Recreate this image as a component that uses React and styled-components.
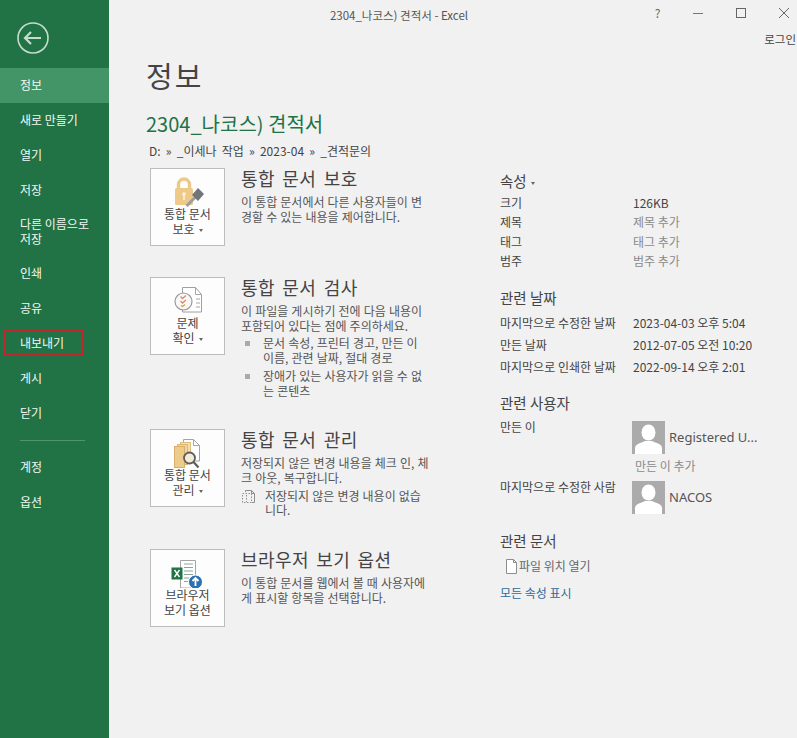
import React from "react";
import styled, { createGlobalStyle } from "styled-components";

const Global = createGlobalStyle`
    html, body {
        margin: 0;
        padding: 0;
        background: #f1f1f1;
    }
    body {
        font-family: "Noto Sans CJK KR", "Noto Sans", sans-serif;
        color: #444;
    }
`;

const Page = styled.div`
    display: flex;
    width: 797px;
    height: 738px;
    overflow: hidden;
`;

const Sidebar = styled.nav`
    width: 109px;
    flex: none;
    background: #217346;
    color: #f2f7f4;
    font-size: 12px;
`;

const BackWrap = styled.div`
    height: 68px;
    padding: 22px 0 0 17px;
    box-sizing: border-box;
`;

const NavItem = styled.div`
    position: relative;
    display: flex;
    align-items: center;
    height: ${props => (props.$tall ? "48px" : "35px")};
    box-sizing: border-box;
    padding: 0 0 2px 20px;
    line-height: 15px;
    white-space: nowrap;
    background: ${props => (props.$active ? "#439467" : "transparent")};
`;

const RedMark = styled.div`
    position: absolute;
    left: 3px;
    top: 4px;
    width: 80px;
    height: 26px;
    box-sizing: border-box;
    border: 2px solid #c0282d;
`;

const NavLine = styled.div`
    height: 1px;
    margin: 9px 24px 9px 20px;
    background: #4f9570;
`;

const Main = styled.main`
    flex: 1;
    display: flex;
    flex-direction: column;
    min-width: 0;
`;

const TitleBar = styled.header`
    position: relative;
    height: 48px;
    padding-right: 108px;
    text-align: center;
    font-size: 11.5px;
    line-height: 30px;
    color: #555;
`;

const WindowButtons = styled.div`
    position: absolute;
    top: 5px;
    right: -8px;
    display: flex;
    align-items: center;
    height: 16px;
`;

const WinButton = styled.div`
    display: flex;
    justify-content: center;
    align-items: center;
    width: ${props => props.$w || 43}px;
    color: #666;
    font-size: 12px;
    line-height: 16px;
`;

const Login = styled.div`
    position: absolute;
    top: 31px;
    right: 1px;
    font-size: 11.5px;
    line-height: 16px;
    color: #444;
`;

const Content = styled.div`
    display: flex;
    padding-left: 37px;
`;

const LeftColumn = styled.div`
    width: 354px;
    flex: none;
`;

const PageTitle = styled.h1`
    margin: 0;
    font-size: 29px;
    font-weight: 400;
    line-height: 54px;
    color: #444;
    letter-spacing: 2px;
`;

const FileTitle = styled.h2`
    margin: 8px 0 0;
    font-size: 20px;
    font-weight: 400;
    line-height: 28px;
    color: #217346;
`;

const PathLine = styled.div`
    margin: 5px 0 0 3px;
    font-size: 12px;
    line-height: 16px;
    word-spacing: 2.5px;
    color: #444;
`;

const Card = styled.section`
    display: flex;
    gap: 16px;
    margin: ${props => props.$top || 0}px 0 31px 4px;
`;

const CardButton = styled.div`
    flex: none;
    width: 75px;
    height: 78px;
    box-sizing: border-box;
    display: flex;
    flex-direction: column;
    align-items: center;
    padding-top: 6px;
    background: #fdfdfd;
    border: 1px solid #bdbdbd;
    font-size: 12px;
    line-height: 14.7px;
    text-align: center;
    color: #444;
    svg {
        display: block;
    }
`;

const Caret = styled.span`
    display: inline-block;
    margin-left: 4px;
    vertical-align: 2px;
    border-left: 2.5px solid transparent;
    border-right: 2.5px solid transparent;
    border-top: 3px solid #666;
`;

const CardBody = styled.div`
    min-width: 0;
    font-size: 12px;
    line-height: 14.7px;
    word-spacing: 0.4px;
    color: #555;
`;

const CardHeading = styled.h3`
    margin: -2px 0 5px;
    font-size: 18px;
    font-weight: 400;
    line-height: 24px;
    letter-spacing: 0.4px;
    word-spacing: 3px;
    color: #444;
`;

const BulletRow = styled.div`
    display: flex;
    margin: 3px 0 3px 4px;
    color: #555;
    &:last-child {
        margin-bottom: 0;
    }
`;

const BulletMark = styled.span`
    flex: none;
    width: 5px;
    height: 5px;
    margin: 5px 13px 0 0;
    background: #aaa;
`;

const NoteRow = styled.div`
    display: flex;
    gap: 9px;
    margin: 3px 0 0;
`;

const RightColumn = styled.aside`
    width: 280px;
    flex: none;
    padding-top: 124px;
    font-size: 12px;
    line-height: 16px;
`;

const PropHeading = styled.div`
    font-size: 14.5px;
    line-height: 18px;
    color: #444;
    margin: ${props => props.$top || 0}px 0 ${props => props.$bottom || 0}px;
`;

const PropRow = styled.div`
    display: flex;
    height: ${props => props.$h || 19.4}px;
`;

const PropLabel = styled.span`
    width: 133px;
    flex: none;
    color: #444;
`;

const PersonLabel = styled(PropLabel)`
    width: 132px;
    margin-top: -2px;
`;

const PropValue = styled.span`
    color: ${props => (props.$muted ? "#8a8a8a" : "#444")};
`;

const PersonRow = styled.div`
    display: flex;
    margin-top: ${props => props.$top || 0}px;
`;

const Person = styled.div`
    display: flex;
    align-items: center;
    gap: 4px;
    font-size: 13px;
    color: #555;
    font-family: "Noto Sans", sans-serif;
`;

const AddAuthor = styled.div`
    margin: 4px 0 0 135px;
    color: #8a8a8a;
`;

const FileLink = styled.div`
    display: flex;
    align-items: center;
    gap: 1px;
    margin: 8px 0 0 5px;
    color: #666;
`;

const AllProps = styled.div`
    margin-top: 10px;
    color: #2b6a9e;
`;

const BackIcon = () => (
    <svg width="32" height="32" viewBox="0 0 32 32" fill="none" stroke="#c4ddcf">
        <circle cx="16" cy="16" r="15" strokeWidth="1.6" />
        <path d="M8 16h16M14 10l-6 6 6 6" strokeWidth="2.2" />
    </svg>
);

const LockIcon = () => (
    <svg width="34" height="32" viewBox="0 0 34 32">
        <path d="M7.500 14V9.500a5.500 5.500 0 0 1 11 0V14" fill="none" stroke="#ecc988" strokeWidth="3.400" />
        <rect x="4" y="13" width="18" height="17" rx="1.500" fill="#eec987" />
        <circle cx="13" cy="19" r="1.800" fill="#fff3d8" />
        <rect x="12.200" y="20" width="1.600" height="5" fill="#fff3d8" />
        <path d="M15.500 31l9-9" stroke="#9b9fa3" strokeWidth="3" />
        <path d="M21 20l6-7 6 6-6 7z" fill="#6f7579" />
    </svg>
);

const InspectIcon = () => (
    <svg width="34" height="32" viewBox="0 0 34 32" fill="none">
        <path d="M11.500 3.500h13l6 7v17.500h-19z" fill="#fff" stroke="#a0a0a0" />
        <path d="M24.500 3.500v7h6M25 15h4M25 19h4M25 23h4" stroke="#a5a5a5" />
        <circle cx="12.500" cy="17.500" r="8.500" fill="#f8f8f8" stroke="#9a9a9a" strokeWidth="1.200" />
        <path d="M9.500 12.500l2 2 3.500-3M9.500 17l2 2 3.500-3" stroke="#d9896a" strokeWidth="1.300" />
        <path d="M10 21.500l1.500 1 2.500-2" stroke="#cfa54a" strokeWidth="1.300" />
    </svg>
);

const ManageIcon = () => (
    <svg width="34" height="32" viewBox="0 0 34 32" fill="none">
        <path d="M12.500 3.500h10l6 6V25h-16z" fill="#fff" stroke="#a5a5a5" />
        <path d="M22.500 3.500v6h6" stroke="#a5a5a5" />
        <rect x="9.500" y="6.500" width="10" height="19" fill="#f2dfb8" stroke="#dfbd80" />
        <rect x="6.500" y="8.500" width="10" height="20" fill="#efd6a3" stroke="#dcb672" />
        <rect x="3.500" y="10.500" width="10" height="21" fill="#eccb8b" stroke="#d9ae66" />
        <circle cx="18.500" cy="22" r="5.500" fill="#f4ecd8" stroke="#5d5d5d" strokeWidth="1.800" />
        <path d="M22.500 26l5 5.500" stroke="#5d5d5d" strokeWidth="2.200" />
    </svg>
);

const BrowserIcon = () => (
    <svg width="34" height="32" viewBox="0 0 34 32" fill="none">
        <path d="M9.500 4.500h15V32h-15z" fill="#fff" stroke="#a5a5a5" />
        <path d="M13 8h9M13 11.500h9M13 15h9M13 18.500h9M13 22h5M13 25.500h5" stroke="#8aa698" />
        <rect x="0.500" y="11.500" width="11" height="12" fill="#217346" />
        <path d="M3.500 14l5 7M8.500 14l-5 7" stroke="#fff" strokeWidth="1.400" />
        <circle cx="24.500" cy="26" r="7" fill="#2a70b2" stroke="#fff" />
        <path d="M24.500 30v-7.500M21.500 25l3-3 3 3" stroke="#fff" strokeWidth="1.800" />
    </svg>
);

const NoteIcon = () => (
    <svg width="15" height="15" viewBox="0 0 15 15" fill="none" stroke="#8f8f8f">
        <path d="M4.500 3V1.500h6l3 3V13.500H11" />
        <path d="M10.500 1.500v3h3" />
        <path d="M1.500 4.500h9v9h-9z" strokeDasharray="1.500 1.500" />
        <path d="M5.500 6v7" strokeDasharray="1.500 1.500" />
    </svg>
);

const FileIcon = () => (
    <svg width="13" height="17" viewBox="0 0 13 17" fill="#fff" stroke="#8d8d8d">
        <path d="M1.500 1.500h7l3 3v11h-10z" />
        <path d="M8.500 1.500v3h3" fill="none" />
    </svg>
);

const AvatarBox = styled.svg`
    display: block;
    flex: none;
`;

const Avatar = () => (
    <AvatarBox width="33" height="33" viewBox="0 0 33 33">
        <rect width="33" height="33" fill="#ababab" />
        <ellipse cx="16.500" cy="11.500" rx="7" ry="8" fill="#fff" />
        <path d="M3 33v-6c0-4 6-5 10-7h7c4 2 10 3 10 7v6z" fill="#fff" />
    </AvatarBox>
);

const navTop = ["새로 만들기", "열기", "저장"];
const navMid = ["인쇄", "공유"];

const App = () => (
    <Page>
        <Global />
        <Sidebar>
            <BackWrap>
                <BackIcon />
            </BackWrap>
            <NavItem $active>정보</NavItem>
            {navTop.map(label => (
                <NavItem key={label}>{label}</NavItem>
            ))}
            <NavItem $tall>
                <span>
                    다른 이름으로
                    <br />
                    저장
                </span>
            </NavItem>
            {navMid.map(label => (
                <NavItem key={label}>{label}</NavItem>
            ))}
            <NavItem>
                내보내기
                <RedMark />
            </NavItem>
            <NavItem>게시</NavItem>
            <NavItem>닫기</NavItem>
            <NavLine />
            <NavItem>계정</NavItem>
            <NavItem>옵션</NavItem>
        </Sidebar>
        <Main>
            <TitleBar>
                2304_나코스) 견적서 - Excel
                <WindowButtons>
                    <WinButton $w={37}>?</WinButton>
                    <WinButton>
                        <svg width="10" height="10" viewBox="0 0 10 10" stroke="#777">
                            <path d="M0 5.500h10" />
                        </svg>
                    </WinButton>
                    <WinButton>
                        <svg width="10" height="10" viewBox="0 0 10 10" fill="none" stroke="#666">
                            <rect x="0.500" y="0.500" width="9" height="9" />
                        </svg>
                    </WinButton>
                    <WinButton>
                        <svg width="10" height="10" viewBox="0 0 10 10" stroke="#666">
                            <path d="M0 0l10 10M10 0L0 10" />
                        </svg>
                    </WinButton>
                </WindowButtons>
                <Login>로그인</Login>
            </TitleBar>
            <Content>
                <LeftColumn>
                    <PageTitle>정보</PageTitle>
                    <FileTitle>2304_나코스) 견적서</FileTitle>
                    <PathLine>D: » _이세나 작업 » 2023-04 » _견적문의</PathLine>
                    <Card $top={9}>
                        <CardButton>
                            <LockIcon />
                            <span>
                                통합 문서
                                <br />
                                보호
                                <Caret />
                            </span>
                        </CardButton>
                        <CardBody>
                            <CardHeading>통합 문서 보호</CardHeading>
                            이 통합 문서에서 다른 사용자들이 변
                            <br />
                            경할 수 있는 내용을 제어합니다.
                        </CardBody>
                    </Card>
                    <Card>
                        <CardButton>
                            <InspectIcon />
                            <span>
                                문제
                                <br />
                                확인
                                <Caret />
                            </span>
                        </CardButton>
                        <CardBody>
                            <CardHeading>통합 문서 검사</CardHeading>
                            이 파일을 게시하기 전에 다음 내용이
                            <br />
                            포함되어 있다는 점에 주의하세요.
                            <BulletRow>
                                <BulletMark />
                                <span>
                                    문서 속성, 프린터 경고, 만든 이
                                    <br />
                                    이름, 관련 날짜, 절대 경로
                                </span>
                            </BulletRow>
                            <BulletRow>
                                <BulletMark />
                                <span>
                                    장애가 있는 사용자가 읽을 수 없
                                    <br />는 콘텐츠
                                </span>
                            </BulletRow>
                        </CardBody>
                    </Card>
                    <Card>
                        <CardButton>
                            <ManageIcon />
                            <span>
                                통합 문서
                                <br />
                                관리
                                <Caret />
                            </span>
                        </CardButton>
                        <CardBody>
                            <CardHeading>통합 문서 관리</CardHeading>
                            저장되지 않은 변경 내용을 체크 인, 체
                            <br />
                            크 아웃, 복구합니다.
                            <NoteRow>
                                <NoteIcon />
                                <span>
                                    저장되지 않은 변경 내용이 없습
                                    <br />
                                    니다.
                                </span>
                            </NoteRow>
                        </CardBody>
                    </Card>
                    <Card>
                        <CardButton>
                            <BrowserIcon />
                            <span>
                                브라우저
                                <br />
                                보기 옵션
                            </span>
                        </CardButton>
                        <CardBody>
                            <CardHeading>브라우저 보기 옵션</CardHeading>
                            이 통합 문서를 웹에서 볼 때 사용자에
                            <br />
                            게 표시할 항목을 선택합니다.
                        </CardBody>
                    </Card>
                </LeftColumn>
                <RightColumn>
                    <PropHeading $bottom={5}>
                        속성
                        <Caret />
                    </PropHeading>
                    <PropRow>
                        <PropLabel>크기</PropLabel>
                        <PropValue>126KB</PropValue>
                    </PropRow>
                    <PropRow>
                        <PropLabel>제목</PropLabel>
                        <PropValue $muted>제목 추가</PropValue>
                    </PropRow>
                    <PropRow>
                        <PropLabel>태그</PropLabel>
                        <PropValue $muted>태그 추가</PropValue>
                    </PropRow>
                    <PropRow>
                        <PropLabel>범주</PropLabel>
                        <PropValue $muted>범주 추가</PropValue>
                    </PropRow>
                    <PropHeading $top={16} $bottom={8}>
                        관련 날짜
                    </PropHeading>
                    <PropRow $h={22}>
                        <PropLabel>마지막으로 수정한 날짜</PropLabel>
                        <PropValue>2023-04-03 오후 5:04</PropValue>
                    </PropRow>
                    <PropRow $h={22}>
                        <PropLabel>만든 날짜</PropLabel>
                        <PropValue>2012-07-05 오전 10:20</PropValue>
                    </PropRow>
                    <PropRow $h={22}>
                        <PropLabel>마지막으로 인쇄한 날짜</PropLabel>
                        <PropValue>2022-09-14 오후 2:01</PropValue>
                    </PropRow>
                    <PropHeading $top={13}>관련 사용자</PropHeading>
                    <PersonRow $top={9}>
                        <PersonLabel>만든 이</PersonLabel>
                        <Person>
                            <Avatar />
                            Registered U...
                        </Person>
                    </PersonRow>
                    <AddAuthor>만든 이 추가</AddAuthor>
                    <PersonRow $top={7}>
                        <PersonLabel>마지막으로 수정한 사람</PersonLabel>
                        <Person>
                            <Avatar />
                            NACOS
                        </Person>
                    </PersonRow>
                    <PropHeading $top={18}>관련 문서</PropHeading>
                    <FileLink>
                        <FileIcon />
                        파일 위치 열기
                    </FileLink>
                    <AllProps>모든 속성 표시</AllProps>
                </RightColumn>
            </Content>
        </Main>
    </Page>
);

export default App;
